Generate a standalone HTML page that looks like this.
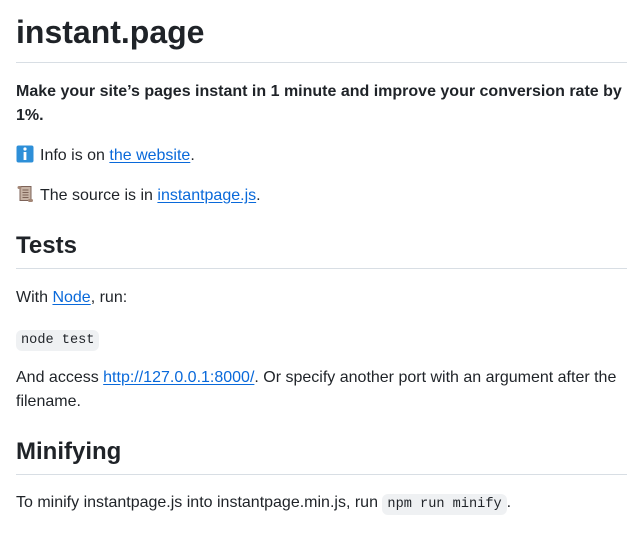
<!DOCTYPE html>
<html><head><meta charset="utf-8"><style>
body{margin:0;padding:12px 11px 0 16px;font-family:"Liberation Sans",sans-serif;color:#1f2328;font-size:16px;line-height:24px;background:#fff}
h1{font-size:32px;line-height:40px;margin:0 0 17px;padding-bottom:10px;border-bottom:1px solid #d8dee4;font-weight:600}
h2{font-size:24px;line-height:30px;margin:23px 0 17px;padding-bottom:7px;border-bottom:1px solid #d8dee4;font-weight:600}
p{margin:0 0 16px}
a{color:#0969da;text-decoration:underline;text-underline-offset:2px}
code{font-family:"Liberation Mono",monospace;font-size:13.6px;background:#eff1f3;padding:3px 5px;border-radius:6px}
.e{display:inline-block;width:18px;height:18px;vertical-align:-3px;margin-right:6px}
</style></head><body>
<h1>instant.page</h1>
<p><b>Make your site’s pages instant in 1 minute and improve your conversion rate by 1%.</b></p>
<p><svg class="e" viewBox="0 0 18 18"><rect x="0.5" y="0.5" width="17" height="17" rx="2" fill="#2d8fd8"/><circle cx="9" cy="4" r="1.6" fill="#fff"/><rect x="7.6" y="7" width="2.8" height="8" fill="#fff"/></svg>Info is on <a>the website</a>.</p>
<p><svg class="e" viewBox="0 0 18 18"><rect x="4" y="1.5" width="11" height="14" fill="#c7b3a5" stroke="#7d6358"/><rect x="1.5" y="1" width="4" height="3" rx="1.5" fill="#a38676"/><rect x="12" y="14" width="5" height="3" rx="1.5" fill="#a38676"/><path d="M6.5 5h6M6.5 7.5h6M6.5 10h6M6.5 12.5h6" stroke="#7d6358"/></svg>The source is in <a>instantpage.js</a>.</p>
<h2>Tests</h2>
<p>With <a>Node</a>, run:</p>
<p style="margin-top:17px;margin-bottom:13px"><code>node test</code></p>
<p>And access <a>http://127.0.0.1:8000/</a>. Or specify another port with an argument after the filename.</p>
<h2 style="margin-bottom:16px">Minifying</h2>
<p>To minify instantpage.js into instantpage.min.js, run <code>npm run minify</code>.</p>
</body></html>
